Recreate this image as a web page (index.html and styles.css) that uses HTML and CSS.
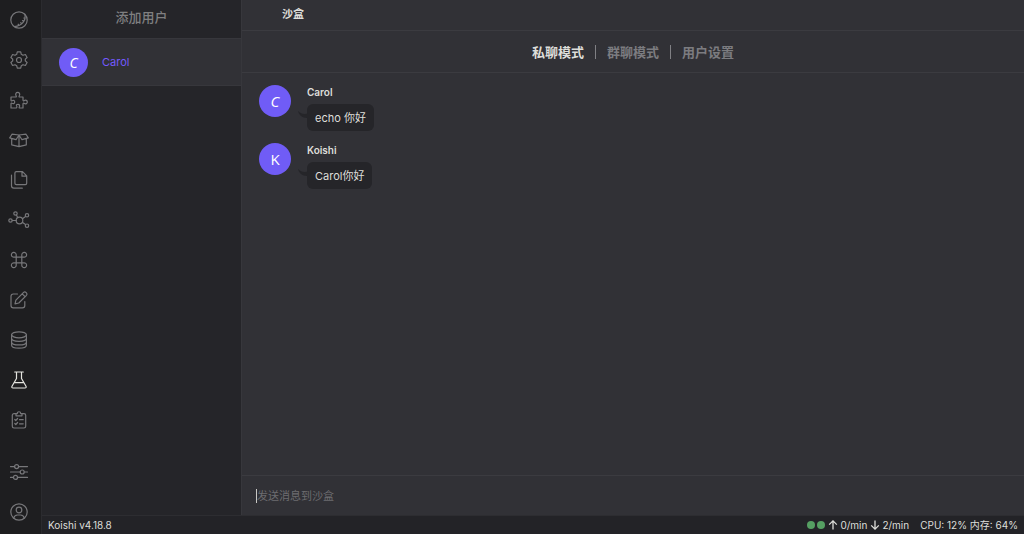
FILE: index.html
```html
<!DOCTYPE html>
<html lang="zh-CN">
<head>
<meta charset="utf-8">
<meta name="viewport" content="width=device-width, initial-scale=1">
<title>沙盒</title>
<link rel="stylesheet" href="styles.css">
</head>
<body>
<div class="app">
  <nav class="activity" aria-label="导航">
    <a class="activity-item" href="#home" aria-label="主页"><svg viewBox="0 0 20 20"><circle cx="10" cy="10" r="8.200"/><path d="M15.800 4.200C17.500 10 13 16 5.500 16.600M16 8.200l-1.200-.2M14.700 11.300l-1.200-.7M12.600 13.700l-.9-1.100M9.700 15.500l-.5-1.300"/></svg></a>
    <a class="activity-item" href="#settings" aria-label="设置"><svg viewBox="0 0 20 20"><circle cx="10" cy="10" r="2.500"/><path d="M8.300 1.900h3.400l.6 2.400 1.700 1 2.400-.8 1.700 3-1.800 1.600v1.800l1.800 1.600-1.700 3-2.400-.8-1.700 1-.6 2.400H8.300l-.6-2.400-1.700-1-2.400.8-1.700-3 1.800-1.600V9.100L1.900 7.500l1.700-3 2.400.8 1.700-1z"/></svg></a>
    <a class="activity-item" href="#plugins" aria-label="插件"><svg viewBox="0 0 20 20"><path d="M2 7h4.700c.7 0 .8-.5.500-1C6 4 7 2.300 8.700 2.300S11.400 4 10.200 6c-.3.500-.2 1 .5 1H14v3c0 .8.5 1 1 .7 1.800-1.200 3.300-.2 3.300 1.300s-1.500 2.500-3.300 1.300c-.5-.3-1-.1-1 .7v4h-3.300c-.6 0-.7-.5-.4-1 .9-1.500.1-2.600-1.300-2.600S6.800 14.500 7.700 16c.3.500.2 2-.5 2H2v-4.300c0-.7.5-.8 1-.5 1.500.9 2.700.1 2.700-1.200S4.500 9.900 3 10.800c-.5.300-1 .1-1-.5z"/></svg></a>
    <a class="activity-item" href="#market" aria-label="插件市场"><svg viewBox="0 0 20 20"><path d="M3 4.200 10 5l7-.8 2.300 3.700-6.300 1.800L10 5 7 9.700.7 7.900zM2.700 8.600v6.200L10 16.600l7.300-1.800V8.600M10 5v11.600"/></svg></a>
    <a class="activity-item" href="#files" aria-label="资源管理器"><svg viewBox="0 0 20 20"><path d="M7.300 1.600h6.200l4.200 4.200v7.400c0 .8-.6 1.400-1.400 1.400h-9c-.8 0-1.400-.6-1.400-1.400V3c0-.8.6-1.400 1.400-1.400zM13 1.800v4.400h4.500M2.500 5.200v10.600c0 1.400 1 2.400 2.400 2.400h8.400"/></svg></a>
    <a class="activity-item" href="#graph" aria-label="依赖图"><svg viewBox="0 0 20 20"><circle cx="10.500" cy="10.500" r="3.300"/><circle cx="6.500" cy="3.500" r="1.700"/><circle cx="18" cy="5.300" r="1.700"/><circle cx="1.500" cy="10.500" r="1.700"/><circle cx="18" cy="15.700" r="1.700"/><path d="M7.400 5 8.800 7.700M13.500 8.800l3-2.300M3.200 10.500h4M13.300 12.300l3.200 2.300"/></svg></a>
    <a class="activity-item" href="#commands" aria-label="指令管理"><svg viewBox="0 0 20 20"><path d="M7.200 7.200h5.600v5.600H7.200zM7.200 7.200H5a2.400 2.400 0 1 1 2.200-2.400zM12.800 7.200V4.800A2.400 2.400 0 1 1 15 7.200zM7.200 12.800v2.400A2.400 2.400 0 1 1 5 12.800zM12.800 12.800H15a2.400 2.400 0 1 1-2.200 2.400z"/></svg></a>
    <a class="activity-item" href="#locales" aria-label="本地化"><svg viewBox="0 0 20 20"><path d="M8.500 4H4.300C3 4 2 5 2 6.300v9.200c0 1.300 1 2.300 2.300 2.300h9.200c1.300 0 2.300-1 2.300-2.300v-4M14.600 2.400c1.600-1.500 4.500 1.200 2.900 2.900l-7.700 7.700-3.800.9.900-3.800zM13.200 3.800l2.900 2.900"/></svg></a>
    <a class="activity-item" href="#database" aria-label="数据库"><svg viewBox="0 0 20 20"><ellipse cx="10" cy="4.800" rx="7.400" ry="3"/><path d="M2.600 4.800v10.400c0 1.700 3.300 3 7.400 3s7.400-1.300 7.400-3V4.800M2.600 8.300c0 1.700 3.300 3 7.400 3s7.400-1.300 7.400-3M2.600 11.900c0 1.700 3.300 3 7.400 3s7.400-1.300 7.400-3"/></svg></a>
    <a class="activity-item active" href="#sandbox" aria-label="沙盒" aria-current="page"><svg viewBox="0 0 20 20"><path d="M5.700 2h8.600M7.500 2v6.500L3 16.300c-.5 1 0 1.700 1 1.700h12c1 0 1.500-.7 1-1.700l-4.500-7.800V2M5.300 12.700h9.400"/></svg></a>
    <a class="activity-item" href="#logs" aria-label="日志"><svg viewBox="0 0 20 20"><path d="M7 3.700H5c-1 0-1.700.7-1.700 1.600v11c0 1 .7 1.700 1.700 1.700h10c1 0 1.700-.7 1.700-1.700v-11c0-.9-.7-1.600-1.700-1.600h-2M7 5.800V3.600h1.300c0-2.500 3.400-2.500 3.400 0H13v2.200zM5.800 9.500l1 1 1.800-2M10.500 9.700h3.700M5.800 13.500l1 1 1.800-2M10.500 13.800h3.700"/></svg></a>
    <a class="activity-item activity-bottom" href="#preferences" aria-label="用户设置"><svg viewBox="0 0 20 20"><circle cx="7.600" cy="4.600" r="2"/><circle cx="13.200" cy="10" r="2"/><circle cx="6.500" cy="15.400" r="2"/><path d="M1.500 4.600h4.100M9.600 4.600h8.900M1.500 10h9.700M15.200 10h3.300M1.500 15.400h3M8.500 15.400h10"/></svg></a>
    <a class="activity-item" href="#profile" aria-label="用户资料"><svg viewBox="0 0 20 20"><circle cx="10" cy="10" r="8.200"/><circle cx="10" cy="8" r="2.800"/><path d="M4.700 16.200c.6-2.600 2.300-3.200 3.700-3.200h3.200c1.400 0 3.100.6 3.700 3.200"/></svg></a>
  </nav>

  <aside class="sidebar">
    <button class="add-user" type="button">添加用户</button>
    <button class="user" type="button">
      <span class="avatar avatar-small avatar-slant">C</span>
      <span>Carol</span>
    </button>
  </aside>

  <main class="content">
    <header class="header"><h1 class="title">沙盒</h1></header>
    <div class="modes">
      <button class="mode selected" type="button">私聊模式</button>
      <span class="divider"></span>
      <button class="mode" type="button">群聊模式</button>
      <span class="divider"></span>
      <button class="mode" type="button">用户设置</button>
    </div>
    <div class="messages">
      <article class="message">
        <span class="avatar avatar-slant">C</span>
        <div>
          <h2 class="name">Carol</h2>
          <p class="bubble"><svg class="tail" viewBox="0 0 10 10"><path d="M0 0c1 4 4 7 9 7h1V2.500C6 3.500 3 3 0 0z"/></svg>echo 你好</p>
        </div>
      </article>
      <article class="message">
        <span class="avatar">K</span>
        <div>
          <h2 class="name">Koishi</h2>
          <p class="bubble"><svg class="tail" viewBox="0 0 10 10"><path d="M0 0c1 4 4 7 9 7h1V2.500C6 3.500 3 3 0 0z"/></svg>Carol你好</p>
        </div>
      </article>
    </div>
    <div class="composer">
      <input class="composer-input" type="text" aria-label="发送消息到沙盒" placeholder="发送消息到沙盒">
    </div>
  </main>

  <footer class="status">
    <span>Koishi v4.18.8</span>
    <span class="traffic">
      <i class="dot"></i><i class="dot"></i>
      <svg class="arrow" viewBox="0 0 10 10"><path d="M5 9.500V1M1.200 4.600 5 .9l3.800 3.700"/></svg><span>0/min</span>
      <svg class="arrow" viewBox="0 0 10 10"><path d="M5 .5V9M1.200 5.400 5 9.100l3.800-3.700"/></svg><span>2/min</span>
    </span>
    <span>CPU: 12% 内存: 64%</span>
  </footer>
</div>
</body>
</html>
```
FILE: styles.css
```css
* {
  box-sizing: border-box;
}

body {
  margin: 0;
  background: #313136;
  color: #dededa;
  font-family: Inter, "Noto Sans CJK SC", sans-serif;
  font-size: 11px;
}

button,
input {
  padding: 0;
  border: 0;
  background: none;
  color: inherit;
  font: inherit;
}

h1,
h2,
p {
  margin: 0;
}

.app {
  display: grid;
  grid-template: minmax(0, 1fr) 19px / 42px 200px minmax(0, 1fr);
  height: 100vh;
}

.activity {
  grid-row: 1 / 3;
  display: flex;
  flex-direction: column;
  padding-bottom: 2px;
  border-right: 1px solid #2b2b2f;
  background: #1e1e20;
}

.activity-item {
  display: flex;
  align-items: center;
  height: 40px;
  padding-left: 9px;
  color: #77777a;
}

.activity-item.active {
  color: #e4e4df;
}

.activity-bottom {
  margin-top: auto;
}

.activity-item svg {
  width: 20px;
  height: 20px;
  overflow: visible;
  fill: none;
  stroke: currentColor;
  stroke-width: 1.2;
  stroke-linejoin: round;
  stroke-linecap: round;
}

.sidebar {
  display: flex;
  flex-direction: column;
  border-right: 1px solid #37373c;
  background: #252529;
}

.add-user {
  height: 38px;
  padding-bottom: 5px;
  color: #7f7f80;
  font-size: 13px;
  font-weight: 500;
}

.user {
  display: flex;
  align-items: center;
  gap: 14px;
  height: 48px;
  padding: 0 17px;
  border: solid #37373c;
  border-width: 1px 0;
  background: #313136;
  color: #7459ff;
}

.avatar {
  display: flex;
  align-items: center;
  justify-content: center;
  flex: none;
  width: 32px;
  height: 32px;
  border-radius: 50%;
  background: #705cf6;
  color: #fff;
  font-family: "Open Sans", sans-serif;
  font-size: 15px;
  font-weight: 500;
}

.avatar-small {
  width: 29px;
  height: 29px;
  font-size: 14px;
}

.avatar-slant {
  font-style: italic;
}

.content {
  display: flex;
  flex-direction: column;
  background: #313136;
}

.header {
  display: flex;
  align-items: center;
  height: 31px;
  padding: 0 40px 4px;
  border-bottom: 1px solid #3b3b40;
}

.title {
  font-size: 11px;
  font-weight: 700;
}

.modes {
  display: flex;
  align-items: center;
  justify-content: center;
  gap: 11px;
  height: 42px;
  border-bottom: 1px solid #3b3b40;
  color: #7c7c80;
  font-size: 13px;
  font-weight: 700;
}

.mode.selected {
  color: #dededa;
}

.divider {
  width: 1px;
  height: 14px;
  background: #808084;
}

.messages {
  flex: 1;
  display: flex;
  flex-direction: column;
  gap: 12px;
  padding: 12px 17px;
}

.message {
  display: flex;
  gap: 16px;
}

.name {
  font-size: 10px;
  font-weight: 600;
  line-height: 15px;
}

.bubble {
  position: relative;
  width: fit-content;
  margin-top: 4px;
  padding: 5px 8px 4px;
  border-radius: 6px;
  background: #252529;
  font-size: 11px;
  line-height: 18px;
}

.tail {
  position: absolute;
  top: 7px;
  left: -9px;
  width: 10px;
  height: 10px;
  fill: #252529;
}

.composer {
  display: flex;
  align-items: center;
  height: 40px;
  padding: 0 14px;
  border-top: 1px solid #3b3b40;
}

.composer-input {
  flex: 1;
  height: 14px;
  border-left: 1px solid #c8c8c5;
  outline: 0;
}

.composer-input::placeholder {
  color: #6d6d70;
}

.status {
  grid-column: 2 / 4;
  display: flex;
  align-items: center;
  gap: 11px;
  padding: 0 6px;
  border-top: 1px solid #2d2d31;
  background: #232327;
  font-size: 10px;
  line-height: 16px;
}

.traffic {
  display: flex;
  align-items: center;
  gap: 2px;
  margin-left: auto;
}

.dot {
  width: 8px;
  height: 8px;
  border-radius: 50%;
  background: #559f62;
}

.arrow {
  width: 10px;
  height: 10px;
  margin-left: 1px;
  fill: none;
  stroke: currentColor;
  stroke-width: 1.3;
}
```
